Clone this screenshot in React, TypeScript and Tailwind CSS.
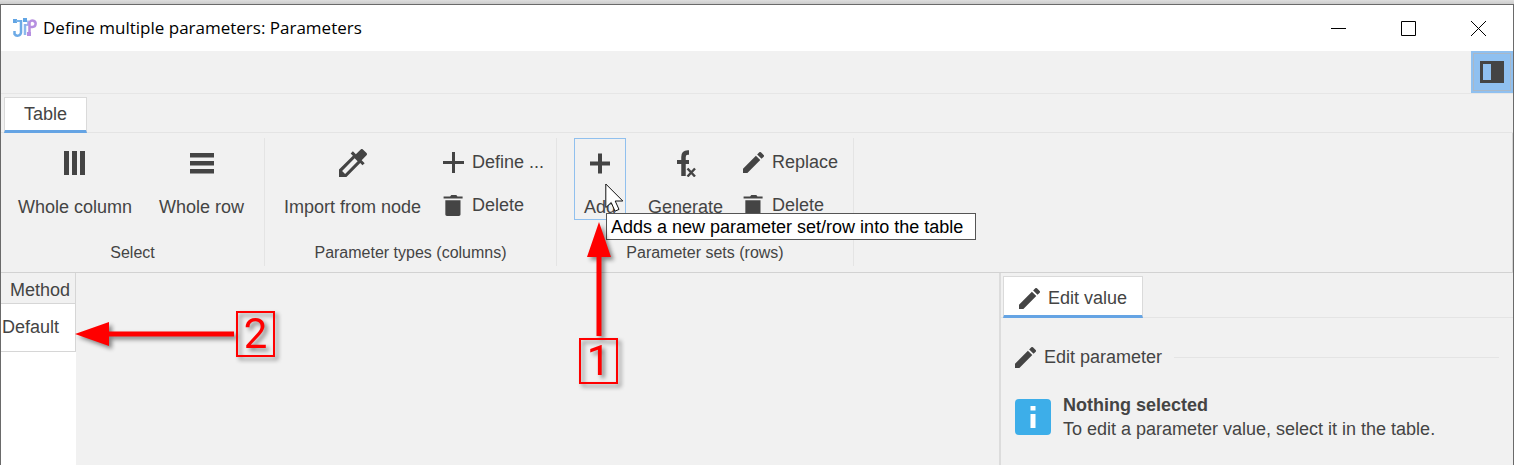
import type { ReactNode } from "react";

const PENCIL =
  "M3 17.25V21h3.75L17.81 9.94l-3.75-3.75L3 17.25zM20.71 7.04a.996.996 0 0 0 0-1.41l-2.34-2.34a.996.996 0 0 0-1.41 0l-1.83 1.83 3.75 3.75 1.83-1.83z";

function AppLogo() {
  return (
    <svg width="24" height="20" viewBox="0 0 24 20" fill="none" aria-hidden="true">
      <rect x="0" y="1" width="4" height="4" fill="#62a5e4" />
      <path d="M3 3h6" stroke="#7ab4ea" strokeWidth="2" />
      <path d="M8 2v12.500a3.500 3.500 0 0 1-6.500 1.500v-3" stroke="#6daae6" strokeWidth="2.500" />
      <rect x="10" y="0" width="4" height="4" fill="#62a5e4" />
      <path d="M12 6v11" stroke="#8cb8ec" strokeWidth="2.500" />
      <path d="M12 7h3V2.500" stroke="#8fa8e8" strokeWidth="1.500" />
      <path d="M16.500 17V4.500a3.200 3.200 0 1 1 3 4.500h-2" stroke="#b68fe0" strokeWidth="2.500" />
      <rect x="14" y="14" width="4" height="4" fill="#b68fe0" />
    </svg>
  );
}

function PencilIcon() {
  return (
    <svg width="21" height="21" viewBox="3 3 18 18" fill="#444" aria-hidden="true">
      <path d={PENCIL} />
    </svg>
  );
}

function TrashIcon() {
  return (
    <svg width="21" height="21" viewBox="3 3 18 18" fill="#444" aria-hidden="true">
      <path d="M5 19.600c0 .8.600 1.400 1.400 1.400h10.200c.8 0 1.400-.6 1.400-1.400V7.500H5zM19.800 4.300h-4.400L14.400 3h-4.300l-1 1.300H3.500V6h16.300z" />
    </svg>
  );
}

function ThinPlusIcon() {
  return (
    <svg width="21" height="21" viewBox="0 0 21 21" stroke="#444" strokeWidth="3" aria-hidden="true">
      <path d="M0 10.500h21M10.500 0v21" />
    </svg>
  );
}

function PlusIcon() {
  return (
    <svg width="24" height="24" viewBox="0 0 24 24" stroke="#444" strokeWidth="4" aria-hidden="true">
      <path d="M2 12.500h20M12 2.500v20" />
    </svg>
  );
}

function ColumnsIcon() {
  return (
    <svg width="24" height="24" viewBox="0 0 24 24" fill="#444" aria-hidden="true">
      <path d="M1 0h5v24h-5zM9 0h5v24h-5zM17 0h5v24h-5z" />
    </svg>
  );
}

function RowsIcon() {
  return (
    <svg width="24" height="24" viewBox="0 0 24 24" fill="#444" aria-hidden="true">
      <path d="M0 2h24v4.500h-24zM0 10h24v4.500h-24zM0 18h24v4.500h-24z" />
    </svg>
  );
}

function DropperIcon() {
  return (
    <svg width="28" height="28" viewBox="3 3 18 18" fill="#444" aria-hidden="true">
      <path d="M20.710 5.630l-2.340-2.340a.996.996 0 0 0-1.410 0l-3.120 3.120-1.930-1.910-1.410 1.410 1.420 1.420L3 16.250V21h4.750l8.920-8.920 1.420 1.420 1.410-1.410-1.920-1.920 3.120-3.120c.4-.4.4-1.030.010-1.420zM6.920 19L5 17.080l8.060-8.060 1.920 1.920L6.920 19z" />
    </svg>
  );
}

function FunctionIcon() {
  return (
    <svg width="24" height="28" viewBox="1 -1 24 28" fill="none" stroke="#444" aria-hidden="true">
      <path d="M16 2.500h-1.200c-3 0-4.300 1.500-4.300 4.500V26" strokeWidth="4.500" />
      <path d="M4 12h12" strokeWidth="4" />
      <path d="M14.500 18.500l7.500 8M22 18.500l-7.500 8" strokeWidth="2.400" />
    </svg>
  );
}

function BigButton({
  icon,
  label,
  className = "border-transparent px-[11px]",
  children,
}: {
  icon: ReactNode;
  label: string;
  className?: string;
  children?: ReactNode;
}) {
  return (
    <div className="relative">
      <button
        type="button"
        className={`flex h-[82px] flex-col items-center justify-between border pt-3 whitespace-nowrap ${className}`}
      >
        <span className="flex h-6 items-center justify-center">{icon}</span>
        <span>{label}</span>
      </button>
      {children}
    </div>
  );
}

function SmallButton({ icon, label }: { icon: ReactNode; label: string }) {
  return (
    <button type="button" className="flex items-center gap-2 whitespace-nowrap">
      {icon}
      {label}
    </button>
  );
}

function SmallButtons({ children }: { children: ReactNode }) {
  return <div className="flex h-[82px] flex-col justify-between pt-3 pb-[3px]">{children}</div>;
}

function Group({
  title,
  className,
  contentClassName,
  children,
}: {
  title: string;
  className: string;
  contentClassName: string;
  children: ReactNode;
}) {
  return (
    <section
      aria-label={title}
      className={`flex shrink-0 flex-col justify-between border-r border-[#e4e4e4] ${className}`}
    >
      <div className={`flex ${contentClassName}`}>{children}</div>
      <div className="pb-[3px] text-center text-base leading-5">{title}</div>
    </section>
  );
}

function Marker({ children }: { children: ReactNode }) {
  return (
    <div className="flex h-[46px] w-[39px] items-center justify-center border-2 border-[#ff0000] font-[Roboto,Arial,sans-serif] text-[42px] leading-none text-[#ff0000] drop-shadow-[3px_3px_2px_rgba(0,0,0,0.45)]">
      {children}
    </div>
  );
}

export default function App() {
  return (
    <div className="flex min-h-screen flex-col bg-[#f1f1f1] font-['Liberation_Sans',Arial,sans-serif] text-[18px] leading-6 text-[#444]">
      <div className="h-1 bg-linear-to-b from-[#dedede] to-[#cccccc]" />
      <div className="flex flex-1 flex-col border border-b-0 border-[#6a6a6a]">
        <header className="flex h-[46px] items-center bg-white text-black">
          <div className="flex flex-1 items-center gap-[6px] pl-3">
            <AppLogo />
            <h1 className="font-['Open_Sans','Noto_Sans',sans-serif] text-[17px] whitespace-nowrap">
              Define multiple parameters: Parameters
            </h1>
          </div>
          <div className="flex">
            <button type="button" aria-label="Minimize" className="flex h-[46px] w-[70px] items-center justify-center">
              <svg width="15" height="15" stroke="#000" aria-hidden="true">
                <path d="M0 7.500h15" />
              </svg>
            </button>
            <button type="button" aria-label="Maximize" className="flex h-[46px] w-[70px] items-center justify-center">
              <svg width="15" height="15" fill="none" stroke="#000" aria-hidden="true">
                <path d="M.5.5h14v14h-14z" />
              </svg>
            </button>
            <button type="button" aria-label="Close" className="flex h-[46px] w-[70px] items-center justify-center">
              <svg width="15" height="15" stroke="#000" aria-hidden="true">
                <path d="M0 0l15 15M15 0L0 15" />
              </svg>
            </button>
          </div>
        </header>

        <div className="flex h-[43px] justify-end border-b border-[#e6e6e6]">
          <button
            type="button"
            aria-label="Toggle side panel"
            className="flex h-[42px] w-[42px] items-center justify-center bg-[#8fc0f0] p-[2px]"
          >
            <span className="flex h-full w-full items-center justify-center border border-[#a9b8c8]">
              <svg width="24" height="22" aria-hidden="true">
                <rect width="24" height="22" fill="#444" />
                <rect x="3" y="3" width="8" height="16" fill="#8fc0f0" />
              </svg>
            </span>
          </button>
        </div>

        <nav className="flex h-[39px] items-end border-b border-[#e4e4e4] pl-[3px]">
          <button
            type="button"
            className="relative top-px h-9 border border-b-3 border-[#dadada] border-b-[#65a4e4] bg-white px-[19px]"
          >
            Table
          </button>
        </nav>

        <div className="flex h-[140px] border-r border-b border-[#d2d2d2] pt-[5px] pb-[6px]">
          <Group title="Select" className="w-[264px]" contentClassName="pl-1">
            <BigButton icon={<ColumnsIcon />} label="Whole column" className="border-transparent px-3" />
            <BigButton icon={<RowsIcon />} label="Whole row" className="border-transparent px-[13px]" />
          </Group>
          <Group title="Parameter types (columns)" className="w-[292px]" contentClassName="pl-[7px]">
            <BigButton icon={<DropperIcon />} label="Import from node" />
            <div className="pl-[10px]">
              <SmallButtons>
                <SmallButton icon={<ThinPlusIcon />} label="Define ..." />
                <SmallButton icon={<TrashIcon />} label="Delete" />
              </SmallButtons>
            </div>
          </Group>
          <Group title="Parameter sets (rows)" className="w-[297px]" contentClassName="pl-[17px]">
            <BigButton icon={<PlusIcon />} label="Add" className="border-[#90c0ee] px-[9px]">
              <div
                className="absolute top-[75px] left-8 z-10 border border-[#555] bg-white pt-px pr-3 pl-1 whitespace-nowrap text-black"
                role="tooltip"
              >
                Adds a new parameter set/row into the table
              </div>
              <svg
                className="absolute top-[45px] left-[31px] z-20"
                width="20"
                height="30"
                viewBox="0 0 20 30"
                fill="#fff"
                stroke="#111"
                aria-hidden="true"
              >
                <path d="M.8 1v23.500l5.400-5 3.800 8.700 4-1.800-3.800-8.400h7.600z" />
              </svg>
              <div className="absolute top-[84px] left-[5px] z-20 flex flex-col items-center gap-[2px]">
                <svg
                  className="overflow-visible drop-shadow-[3px_3px_2px_rgba(0,0,0,0.45)]"
                  width="24"
                  height="114"
                  fill="#ff0000"
                  aria-hidden="true"
                >
                  <path d="M12 0l12 35h-9.500v79h-5V35H0z" />
                </svg>
                <Marker>1</Marker>
              </div>
            </BigButton>
            <BigButton icon={<FunctionIcon />} label="Generate" className="ml-[9px] border-transparent px-3" />
            <div className="pl-[7px]">
              <SmallButtons>
                <SmallButton icon={<PencilIcon />} label="Replace" />
                <SmallButton icon={<TrashIcon />} label="Delete" />
              </SmallButtons>
            </div>
          </Group>
        </div>

        <main className="flex flex-1">
          <div className="flex flex-1">
            <div className="relative w-[75px] bg-white">
              <table className="w-full border-collapse">
                <thead>
                  <tr className="h-[30px] bg-[#f1f1f1]">
                    <th className="border-r border-b border-[#d6d6d6] p-0 pt-1 pl-1 text-center font-normal">Method</th>
                  </tr>
                </thead>
                <tbody>
                  <tr className="h-12">
                    <td className="border-r border-b border-[#d6d6d6] p-0 pl-px">Default</td>
                  </tr>
                </tbody>
              </table>
              <div className="absolute top-[38px] left-[74px] flex items-center gap-[2px]">
                <svg
                  className="overflow-visible drop-shadow-[3px_3px_2px_rgba(0,0,0,0.45)]"
                  width="159"
                  height="24"
                  fill="#ff0000"
                  aria-hidden="true"
                >
                  <path d="M0 12L34 0v9.500h125v5H34V24z" />
                </svg>
                <Marker>2</Marker>
              </div>
            </div>
          </div>

          <aside className="w-[34%] border-l-2 border-[#dcdcdc]">
            <div className="flex h-[45px] items-end border-b border-[#e4e4e4] pl-[2px]">
              <button
                type="button"
                className="relative top-px flex h-[42px] items-center gap-2 border border-b-3 border-[#dadada] border-b-[#65a4e4] bg-white px-[15px] pt-1"
              >
                <PencilIcon />
                Edit value
              </button>
            </div>
            <div className="px-[14px] pt-[27px]">
              <h2 className="flex items-center gap-2">
                <PencilIcon />
                Edit parameter
                <span className="ml-1 h-px flex-1 bg-[#e4e4e4]" />
              </h2>
              <div className="mt-6 flex items-end gap-3">
                <svg className="mb-[6px]" width="36" height="36" viewBox="0 0 36 36" aria-hidden="true">
                  <rect width="36" height="36" rx="4" fill="#3daee9" />
                  <path d="M15.500 7h5v4.500h-5zM15.500 15h5v14h-5z" fill="#fff" />
                </svg>
                <div>
                  <div className="font-bold">Nothing selected</div>
                  <div>To edit a parameter value, select it in the table.</div>
                </div>
              </div>
            </div>
          </aside>
        </main>
      </div>
    </div>
  );
}
